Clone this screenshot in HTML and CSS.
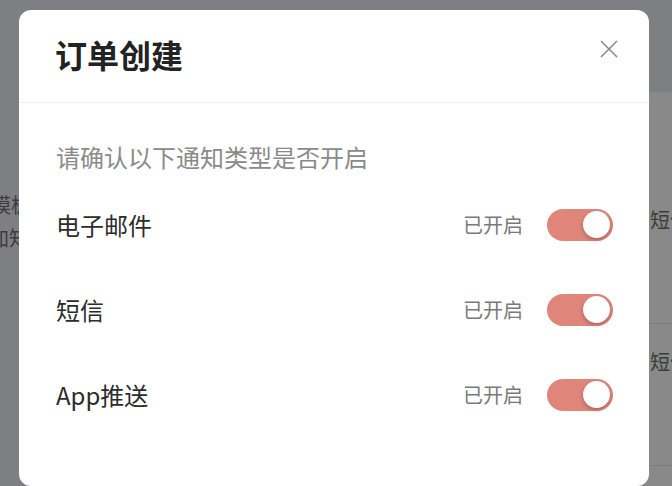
FILE: index.html
```html
<!DOCTYPE html>
<html lang="zh-CN">
<head>
<meta charset="utf-8">
<title>订单创建</title>
<link rel="stylesheet" href="styles.css">
</head>
<body>
<div class="app">
  <header class="topbar"></header>
  <div class="main">
    <aside class="side">
      <div class="side-item">模板</div>
      <div class="side-item">加知</div>
    </aside>
    <section class="list">
      <div class="list-row"><span class="list-cell">短信</span></div>
      <div class="list-row"><span class="list-cell">短信</span></div>
    </section>
  </div>

  <div class="modal">
    <div class="modal-header">
      <h1 class="modal-title">订单创建</h1>
      <span class="modal-close">
        <svg width="18" height="18" viewBox="0 0 18 18"><path d="M1 1L17 17M17 1L1 17" stroke="#8c8c8c" stroke-width="1.6" fill="none"/></svg>
      </span>
    </div>
    <div class="modal-body">
      <p class="hint">请确认以下通知类型是否开启</p>
      <div class="row">
        <span class="label">电子邮件</span>
        <div class="right"><span class="status">已开启</span><span class="switch"><span class="knob"></span></span></div>
      </div>
      <div class="row">
        <span class="label">短信</span>
        <div class="right"><span class="status">已开启</span><span class="switch"><span class="knob"></span></span></div>
      </div>
      <div class="row">
        <span class="label">App推送</span>
        <div class="right"><span class="status">已开启</span><span class="switch"><span class="knob"></span></span></div>
      </div>
    </div>
  </div>
</div>
</body>
</html>
```
FILE: styles.css
```css
html, body {
  margin: 0;
  padding: 0;
}
body {
  width: 672px;
  height: 486px;
  overflow: hidden;
  font-family: "Noto Sans CJK SC", "Noto Sans", sans-serif;
  background: #898989;
}
.app {
  position: relative;
  width: 672px;
  height: 486px;
  overflow: hidden;
  display: flex;
  flex-direction: column;
}
.topbar {
  height: 92px;
  flex: none;
  background: #7e7f82;
}
.main {
  flex: 1;
  min-height: 0;
  display: flex;
}
.side {
  width: 120px;
  flex: none;
  background: #7e7f82;
  padding-top: 96px;
  display: flex;
  flex-direction: column;
}
.side-item {
  font-size: 20px;
  line-height: 33px;
  color: #3c3c3c;
  white-space: nowrap;
  margin-left: -9px;
}
.side-item + .side-item {
  margin-left: -11px;
}
.list {
  flex: 1;
  display: flex;
  flex-direction: column;
  padding-left: 530px;
  padding-top: 90px;
}
.list-row {
  height: 142px;
  flex: none;
  box-sizing: border-box;
  border-bottom: 1px solid #7b7b7b;
  display: flex;
  align-items: flex-start;
  padding-top: 24px;
}
.list-cell {
  font-size: 20px;
  line-height: 28px;
  color: #3c3c3c;
  white-space: nowrap;
}

.modal {
  position: absolute;
  left: 19px;
  top: 10px;
  width: 630px;
  height: 476px;
  background: #fff;
  border-radius: 12px;
  display: flex;
  flex-direction: column;
}
.modal-header {
  height: 92px;
  flex: none;
  border-bottom: 1px solid #eeeeee;
  display: flex;
  align-items: center;
  justify-content: space-between;
  padding: 0 31px 0 36px;
}
.modal-title {
  margin: 0;
  font-size: 32px;
  font-weight: 700;
  color: #222;
  line-height: 40px;
  margin-top: -4px;
}
.modal-close {
  display: flex;
  margin-top: -14px;
}
.modal-body {
  padding: 37px 36px 0 37px;
}
.hint {
  margin: 0 0 8px;
  font-size: 24px;
  line-height: 34px;
  color: #8a8a8a;
}
.row {
  height: 85px;
  display: flex;
  align-items: center;
  justify-content: space-between;
}
.label {
  font-size: 24px;
  color: #2c2c2c;
}
.right {
  display: flex;
  align-items: center;
  gap: 24px;
}
.status {
  font-size: 20px;
  color: #7a7a7a;
}
.switch {
  width: 66px;
  height: 32px;
  border-radius: 16px;
  background: #e0857a;
  display: flex;
  align-items: center;
  justify-content: flex-end;
  padding: 0 3px;
  box-sizing: border-box;
}
.knob {
  width: 27px;
  height: 27px;
  border-radius: 50%;
  background: #fff;
  box-shadow: 0 2px 4px rgba(0, 0, 0, 0.25);
}
```
